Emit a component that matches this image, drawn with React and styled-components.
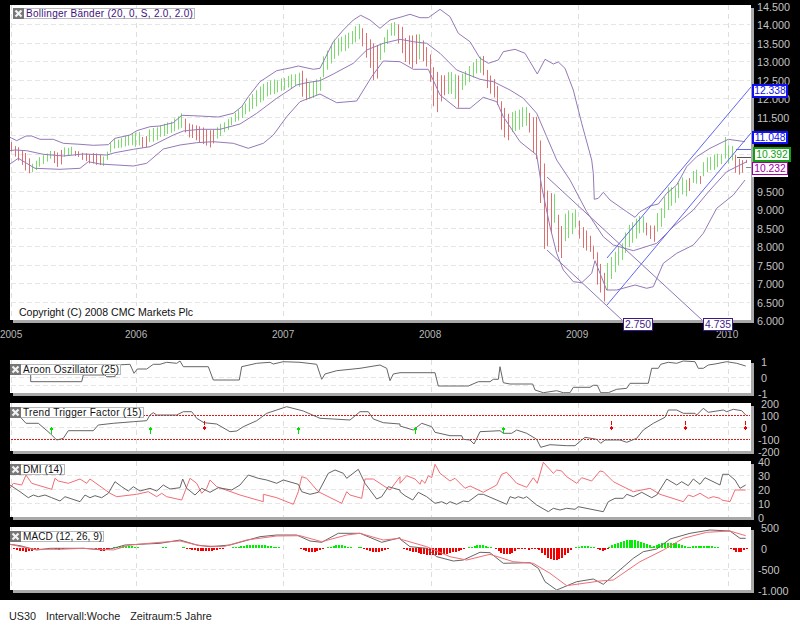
import React from "react";
import styled, { createGlobalStyle } from "styled-components";

const Global = createGlobalStyle`
  html, body { margin: 0; padding: 0; background: #fff; }
  body { font-family: "Liberation Sans", Arial, sans-serif; }
`;

const Page = styled.div`
  width: 800px;
  height: 625px;
  display: flex;
  flex-direction: column;
  overflow: hidden;
`;
const Terminal = styled.div`
  height: 600px;
  box-sizing: border-box;
  background: #000;
  padding: 5px 0 0 10px;
  display: flex;
  flex-direction: column;
`;
const ChartRow = styled.div`
  position: relative;
  display: flex;
  height: ${(p) => p.$height}px;
  margin-bottom: ${(p) => p.$after}px;
`;
const Plot = styled.div`
  position: relative;
  width: 741px;
  height: 100%;
  background: #fff;
  box-shadow: 3px 3px 0 #a9a9a9;
`;
const PlotSvg = styled.svg`
  display: block;
  width: 100%;
  height: 100%;
`;
const Axis = styled.div`
  display: flex;
  flex-direction: column;
  justify-content: space-between;
  align-items: flex-start;
  margin: ${(p) => p.$top}px 0 0 ${(p) => p.$left}px;
  height: ${(p) => p.$height}px;
  color: #c4c4c4;
  font-size: 10.8px;
  line-height: 10px;
  white-space: nowrap;
`;
const AxisLabel = styled.span`
  visibility: ${(p) => (p.$hidden ? "hidden" : "visible")};
`;
const YearAxis = styled.div`
  display: flex;
  height: 40px;
  margin: 0 0 0 -10px;
  color: #b8b8b8;
  font-size: 10px;
  line-height: 12px;
  padding-top: 9px;
  box-sizing: border-box;
`;
const Year = styled.span`
  flex: 0 0 ${(p) => p.$width}px;
`;
const Legend = styled.div`
  position: absolute;
  left: ${(p) => p.$left}px;
  top: ${(p) => p.$top}px;
  display: flex;
  align-items: center;
  height: 9px;
  padding-right: 1px;
  background: #fff;
  border: 1px solid #b9b9b9;
  border-left: 0;
  color: ${(p) => p.$color};
  font-size: 10px;
  line-height: 9px;
  letter-spacing: ${(p) => p.$spacing}px;
  white-space: nowrap;
`;
const CloseBox = styled.span`
  flex: 0 0 11px;
  width: 11px;
  height: 11px;
  margin: -1px 2px -1px 0;
  background: #777;
  display: flex;
  align-items: center;
  justify-content: center;
`;
const Copyright = styled.div`
  position: absolute;
  left: 9px;
  bottom: 1px;
  color: #111;
  font-size: 10.55px;
  line-height: 13px;
  background: #fff;
`;
const PriceTag = styled.div`
  position: absolute;
  left: ${(p) => p.$left}px;
  top: ${(p) => p.$top}px;
  width: ${(p) => p.$width || 36}px;
  height: ${(p) => p.$h || 14}px;
  box-sizing: border-box;
  border: ${(p) => p.$border || 2}px solid ${(p) => p.$color};
  background: #fff;
  color: ${(p) => p.$color};
  font-size: 10.3px;
  line-height: ${(p) => (p.$h || 14) - 2 * (p.$border || 2)}px;
  text-align: center;
  white-space: nowrap;
  box-shadow: ${(p) => (p.$strip ? "0 2px 0 #fff" : "none")};
`;
const Footer = styled.div`
  flex: 1;
  display: flex;
  align-items: center;
  gap: 10px;
  padding: 6px 0 0 9px;
  color: #222;
  font-size: 10.8px;
  white-space: nowrap;
`;

const pts = (...parts) =>
  parts
    .map(([ox, oy, s]) =>
      s
        .trim()
        .split(/\s+/)
        .map((p) => {
          const [x, y] = p.split(",").map(Number);
          return `${(ox + x / 3).toFixed(1)},${(oy + y / 3).toFixed(1)}`;
        })
        .join(" ")
    )
    .join(" ");

const upperBand = pts(
  [0, 0, "30,412 50,422 78,408 95,408 120,418 160,418 190,430 240,433 280,436 325,434 345,415 390,405 410,392 450,380 480,378 520,368 545,346 580,347 655,351 700,340 725,320 745,290 780,245 830,212 870,204 895,198 940,208 960,205 975,175 1000,125 1030,90 1060,60 1082,46 1110,60 1140,85 1170,60 1200,52"],
  [400, 0, "30,43 60,53 85,53 120,28 150,50 175,100 210,125 240,175 265,190 295,180 310,155 345,148 375,160 412,222 435,178 460,192 475,186 495,205 520,270 545,370 575,480"],
  [400, 130, "580,130 583,208 595,205 610,187 630,210 680,245 705,262 720,245 750,228 775,222 800,190 830,165 860,110 890,80 930,55 985,28 1035,35"]
);
const midBand = pts(
  [0, 0, "30,452 45,450 80,452 130,463 190,468 250,462 320,465 345,458 400,448 450,440 520,405 550,393 600,388 660,388 720,372 770,340 830,295 890,255 920,248 960,242 1000,222 1060,190 1100,150 1150,130 1200,118"],
  [400, 0, "40,125 80,130 120,160 170,210 240,238 280,245 330,270 370,295 410,340 440,410 470,480"],
  [400, 130, "510,150 560,245 610,320 640,345 700,362 770,340 820,290 880,240 930,180 980,125 1040,95"]
);
const lowerBand = pts(
  [0, 0, "30,492 55,475 80,490 105,505 180,508 240,505 265,485 300,492 400,498 440,490 490,447 540,435 590,428 640,425 700,430 745,445 790,430 820,405 860,350 900,305 960,282 1010,308 1070,303 1115,230 1150,183 1200,185"],
  [400, 0, "40,208 85,208 120,285 170,325 210,325 250,292 290,305 310,350 360,425 410,465"],
  [400, 130, "425,170 450,290 470,370 490,420 520,455 545,458 575,430 585,392 600,430 620,480 650,480 705,465 740,475 760,470 790,400 830,370 880,345 910,310 950,235 1000,195 1035,150"]
);

const R = "r";
const G = "g";
const keys = [
  [11, 142, 152, R], [26, 153, 172, R], [32, 163, 172, G], [52, 150, 157, G], [54, 153, 165, R], [60, 152, 170, R],
  [62, 147, 157, G], [72, 146, 156, G], [75, 150, 157, R], [97, 155, 165, R], [105, 158, 165, G], [112, 140, 150, G],
  [140, 130, 145, G], [143, 137, 147, R], [146, 137, 147, R], [149, 130, 142, G], [164, 125, 137, G], [183, 112, 128, G],
  [186, 122, 135, R], [212, 132, 147, R], [215, 130, 142, G], [240, 108, 118, G], [262, 85, 100, G], [298, 72, 84, G],
  [302, 72, 95, R], [305, 78, 100, R], [308, 85, 100, G], [320, 78, 92, G], [323, 58, 78, G], [333, 40, 60, G],
  [360, 25, 37, G], [363, 30, 48, R], [368, 37, 63, R], [375, 48, 87, R], [380, 43, 62, G], [392, 20, 33, G],
  [397, 22, 40, R], [402, 27, 53, R], [405, 37, 62, R], [414, 37, 68, R], [418, 33, 57, G], [422, 40, 60, R],
  [428, 50, 70, R], [435, 70, 118, R], [442, 75, 98, R], [447, 72, 95, G], [453, 72, 93, G], [458, 75, 108, R],
  [462, 75, 88, G], [478, 57, 72, G], [483, 57, 75, R], [487, 70, 90, R], [497, 83, 103, R], [500, 98, 128, R],
  [507, 113, 142, R], [510, 113, 132, G], [527, 107, 125, G], [530, 115, 135, R], [532, 118, 153, R], [536, 115, 155, R],
  [540, 140, 205, R], [543, 157, 250, R], [546, 187, 247, R], [549, 197, 248, R], [553, 187, 213, G], [556, 202, 238, R],
  [560, 230, 267, R], [563, 217, 243, G], [567, 210, 238, G], [573, 215, 233, G], [577, 208, 223, G], [580, 227, 245, R],
  [583, 228, 250, R], [590, 237, 253, R], [593, 245, 258, R], [597, 252, 287, R], [600, 262, 293, R], [604, 272, 302, R],
  [607, 263, 290, G], [610, 257, 280, G], [622, 243, 258, G], [627, 227, 248, G], [642, 215, 232, G], [647, 223, 237, R],
  [654, 225, 243, R], [657, 212, 233, G], [662, 205, 223, G], [667, 187, 210, G], [677, 188, 200, G], [680, 178, 193, G],
  [685, 180, 195, G], [688, 182, 195, R], [692, 172, 183, G], [697, 169, 185, G], [700, 175, 185, R], [704, 158, 175, G],
  [717, 153, 167, G], [721, 153, 163, G], [723, 135, 155, G], [728, 146, 163, G], [732, 147, 160, G], [735, 155, 172, R],
  [741, 162, 178, R], [745, 160, 163, R],
];
const jitter = (i) => ((Math.sin(i * 12.9898) * 43758.5453) % 1) * 1.6;
const priceBars = [];
for (let i = 0; i < 260; i++) {
  const x = 11 + i * 3.55;
  if (x > 746) break;
  let k = 0;
  while (k < keys.length - 2 && keys[k + 1][0] < x) k++;
  const a = keys[k];
  const b = keys[k + 1];
  const t = Math.max(0, Math.min(1, (x - a[0]) / (b[0] - a[0])));
  const top = a[1] + (b[1] - a[1]) * t + jitter(i);
  const bot = a[2] + (b[2] - a[2]) * t + jitter(i + 40);
  priceBars.push({ x: Math.round(x) + 0.5, top, bot, c: t < 0.5 ? a[3] : b[3] });
}

const Line = ({ p, c = "#9479b8", w = 1 }) => <polyline points={p} fill="none" stroke={c} strokeWidth={w} />;
const DIAG = "#8f77b5";
const BLUE = "#5f66ee";

const XGrid = ({ y1, y2 }) =>
  [11, 136, 283, 431, 578, 728].map((x) => (
    <line key={x} x1={x + 0.5} x2={x + 0.5} y1={y1} y2={y2} stroke="#dedede" strokeDasharray="5 4" />
  ));
const YGrid = ({ ys }) =>
  ys.map((y) => <line key={y} x1="11" x2="750" y1={y + 0.5} y2={y + 0.5} stroke="#e6e6e6" strokeDasharray="5 3" />);

const mainYs = [24, 43, 61, 80, 98, 117, 135, 154, 172, 191, 209, 228, 246, 265, 283, 302];

const X = () => (
  <svg width="9" height="9" viewBox="0 0 9 9">
    <path d="M1.5 1.5 L7.5 7.5 M7.5 1.5 L1.5 7.5" stroke="#f2f2f2" strokeWidth="2.2" />
  </svg>
);
const LegendBox = ({ left, top, color = "#111", spacing, children }) => (
  <Legend $left={left} $top={top} $color={color} $spacing={spacing}>
    <CloseBox><X /></CloseBox>
    {children}
  </Legend>
);

const aroon = pts(
  [0, 350, "92,72 92,95 245,95 250,75 315,75 320,80 345,80 350,45 390,43 402,70 412,57 440,57 460,43 480,43 500,37 530,40 540,33 550,50 625,50 640,90 718,90 725,50 770,40 810,37 820,42 850,35 900,37 950,43 965,88 975,72 1010,62 1080,55 1140,45 1160,55 1170,92 1180,72 1200,68"],
  [400, 350, "105,68 115,108 205,108 235,95 270,95 280,88 295,88 300,50 310,98 330,102 398,102 405,120 430,128 470,122 490,128 510,128 520,112 570,112 580,106 592,106 602,128 625,128 650,118 680,115 690,100 745,100 755,55 775,55 782,43 805,37 830,40 850,33 885,35 895,55 910,55 925,45 945,42 980,35 1010,40 1037,48"]
);
const trend = pts(
  [0, 350, "60,200 78,220 115,220 150,250 170,270 190,265 205,242 280,242 295,225 340,220 400,215 440,212 450,195 460,188 470,195 530,195 550,185 575,185 590,205 612,218 650,222 690,245 710,243 730,230 770,212 800,190 830,180 860,170 910,183 960,205 1000,207 1050,210 1080,185 1105,185 1120,207 1150,218 1200,222"],
  [400, 350, "0,228 40,240 65,220 95,230 105,247 150,257 185,257 190,268 210,270 222,282 240,245 300,242 310,250 335,250 350,240 380,250 410,268 422,292 450,284 500,287 525,287 545,270 555,262 590,268 602,280 615,270 660,270 680,277 710,265 730,240 760,220 795,202 805,180 830,180 850,190 885,190 890,195 910,175 925,187 970,180 980,185 1000,178 1025,182 1037,195"]
);
const dmiBlack = pts(
  [0, 455, "30,90 60,110 85,128 100,120 115,125 135,120 155,128 180,138 195,125 240,140 255,120 270,128 285,122 305,128 325,115 345,80 365,95 385,108 400,95 420,108 450,100 470,108 490,90 510,102 540,98 548,72 560,100 585,120 605,100 630,112 655,98 695,105 720,90 745,60 775,70 800,75 830,85 850,75 895,88 905,110 930,118 955,112 985,55 1005,45 1030,55 1040,70 1075,43 1095,85 1130,132 1145,125 1165,95 1200,105"],
  [400, 455, "0,110 15,122 38,135 55,112 80,125 105,145 125,140 140,147 150,140 170,148 190,138 205,140 235,118 250,118 320,148 330,125 345,130 355,125 370,130 380,125 410,150 445,170 460,160 480,165 500,160 525,163 535,155 610,170 625,140 645,130 670,130 680,118 700,125 725,112 755,128 770,120 800,72 830,90 845,80 865,92 880,72 900,88 915,68 960,90 968,58 985,58 1005,75 1020,100 1037,90"]
);
const dmiRed = pts(
  [0, 455, "30,100 40,85 65,90 78,60 95,85 155,103 165,70 175,78 205,85 240,72 260,85 270,72 330,115 350,125 410,118 445,110 470,125 485,115 500,125 545,135 570,70 590,85 605,115 620,100 630,75 650,95 720,120 790,140 790,118 830,128 880,148 895,110 905,65 920,70 955,110 1025,145 1040,110 1050,120 1085,130 1095,72 1120,72 1170,105 1200,65"],
  [400, 455, "0,85 20,62 45,72 60,88 65,75 75,85 85,62 95,68 105,28 120,55 150,78 165,70 195,100 210,93 250,112 290,90 305,58 320,52 350,85 380,97 400,68 412,85 430,22 460,55 470,45 485,48 500,65 530,85 545,68 575,78 600,48 610,50 640,80 700,110 750,100 780,118 850,140 865,120 880,125 900,115 925,130 940,125 960,130 965,135 990,140 1005,105 1037,105"]
);
const macdBlack = pts(
  [0, 455, "30,268 60,272 110,285 150,280 250,280 310,285 340,280 375,270 480,265 540,255 590,270 630,275 690,270 780,245 830,240 890,240 930,258 965,262 1015,235 1080,235 1145,262 1200,248"],
  [400, 455, "0,252 30,275 80,280 110,305 160,318 190,315 240,292 270,293 310,325 390,323 415,340 435,380 470,405 530,380 580,372 610,388 700,310 730,290 770,282 810,252 870,235 930,225 990,228 1020,250 1037,250"]
);
const macdRed = pts(
  [0, 455, "30,268 100,283 180,283 250,280 340,285 390,270 480,262 540,258 600,272 670,275 740,255 830,243 900,242 965,260 1040,240 1080,235 1150,255 1200,250"],
  [400, 455, "0,252 80,275 150,305 200,315 270,298 340,320 400,325 450,355 500,392 600,378 640,375 720,320 790,285 850,250 920,232 990,228 1037,242"]
);

const histGroups = [
  [0, 40, 110, 3.5, R], [0, 165, 185, 1.5, R], [0, 285, 325, 3, R], [0, 340, 410, 2, G], [0, 485, 495, 1, G], [0, 545, 550, 1, G],
  [0, 558, 665, 3.5, R], [0, 695, 835, 3, G], [0, 900, 965, 4, R], [0, 980, 1050, 3, G], [0, 1075, 1080, 1, G], [0, 1090, 1160, 4, R],
  [400, 10, 190, 7, R], [400, 205, 270, 3, G], [400, 285, 350, 6, R], [400, 355, 410, 1.5, R], [400, 415, 510, 12, R], [400, 525, 580, 2, G],
  [400, 590, 620, 3, R], [400, 625, 755, 8, G], [400, 750, 860, 5.5, G], [400, 860, 950, 2.5, G], [400, 990, 1037, 4, R],
];
const histBars = [];
histGroups.forEach(([ox, a, b, amp, c]) => {
  const n = Math.max(1, Math.round((b - a) / 8.5));
  for (let i = 0; i <= n; i++) {
    const t = i / n;
    const skew = Math.sin(t * Math.PI);
    histBars.push({ x: Math.round(ox + (a + ((b - a) * i) / n) / 3), h: Math.max(1, Math.round(amp * (0.15 + 0.85 * skew))), c });
  }
});

const Arrow = ({ x, up }) => {
  const color = up ? "#00e000" : "#f00000";
  const head = up ? 427 : 426;
  const stemA = up ? 430 : 421;
  return (
    <g fill={color}>
      <rect x={x} y={stemA} width="1" height="4" />
      <rect x={x} y={head} width="1" height="4" />
      <rect x={x - 1} y={head + 1} width="3" height="2" />
    </g>
  );
};

const PanelSvg = ({ y, h, children }) => (
  <PlotSvg viewBox={`10 ${y} 741 ${h}`} preserveAspectRatio="none">
    {children}
  </PlotSvg>
);

const years = [
  ["2005", 125], ["2006", 147], ["2007", 147], ["2008", 147], ["2009", 150], ["2010", 40],
];
const mainLabels = [
  ["14.500"], ["14.000"], ["13.500"], ["13.000"], ["12.500"], ["12.000"], ["11.500"], ["11.000", true], ["10.500", true],
  ["10.000", true], ["9.500"], ["9.000"], ["8.500"], ["8.000"], ["7.500"], ["7.000"], ["6.500"], ["6.000"],
];

export default function App() {
  return (
    <Page>
      <Global />
      <Terminal>
        <ChartRow $height={315} $after={0}>
          <Plot>
            <PanelSvg y={5} h={315}>
              <XGrid y1={5} y2={320} />
              <YGrid ys={mainYs} />
              {priceBars.map((b, i) => (
                <line key={i} x1={b.x} x2={b.x} y1={b.top} y2={b.bot} stroke={b.c === G ? "#79dc6c" : "#dc6f70"} />
              ))}
              <Line p={upperBand} />
              <Line p={midBand} />
              <Line p={lowerBand} />
              <Line p="547,177 702,320" c={DIAG} />
              <Line p="547,250 622,320" c={DIAG} />
              <Line p="607,258 751,87" c={BLUE} />
              <Line p="607,305 751,133" c={BLUE} />
              <Line p="736,149.5 751,149.5" c={BLUE} />
              <Line p="737,157.5 751,157.5" c="#555" />
              <Line p="746,167.5 751,167.5" c="#888" />
            </PanelSvg>
            <LegendBox left={3} top={3} color="#3f1080" spacing={0.28}>Bollinger Bänder (20, 0, S, 2.0, 2.0)</LegendBox>
            <Copyright>Copyright (C) 2008 CMC Markets Plc</Copyright>
          </Plot>
          <Axis $top={-3} $left={6} $height={324}>
            {mainLabels.map(([t, hidden]) => (
              <AxisLabel key={t} $hidden={hidden}>{t}</AxisLabel>
            ))}
          </Axis>
          <PriceTag $left={742} $top={79} $color="#1010f0">12.338</PriceTag>
          <PriceTag $left={742} $top={126} $h={13} $color="#1010f0">11.048</PriceTag>
          <PriceTag $left={743} $top={142} $width={38} $h={15} $color="#12a012">10.392</PriceTag>
          <PriceTag $left={742} $top={157} $h={13} $border={1} $strip $color="#a000a0">10.232</PriceTag>
          <PriceTag $left={613} $top={313} $width={30} $h={13} $border={1} $color="#3d1a88">2.750</PriceTag>
          <PriceTag $left={693} $top={313} $width={30} $h={13} $border={1} $color="#3d1a88">4.735</PriceTag>
        </ChartRow>
        <YearAxis>
          {years.map(([y, w]) => (
            <Year key={y} $width={w}>{y}</Year>
          ))}
        </YearAxis>
        <ChartRow $height={33} $after={10}>
          <Plot>
            <PanelSvg y={360} h={33}>
              <XGrid y1={360} y2={393} />
              <YGrid ys={[377, 385]} />
              <Line p={aroon} c="#666" />
            </PanelSvg>
            <LegendBox left={0} top={4} spacing={0.22}>Aroon Oszillator (25)</LegendBox>
          </Plot>
          <Axis $top={-3} $left={7} $height={42}>
            <span>&nbsp;1</span>
            <span>&nbsp;0</span>
            <span>-1</span>
          </Axis>
        </ChartRow>
        <ChartRow $height={48} $after={10}>
          <Plot>
            <PanelSvg y={403} h={48}>
              <XGrid y1={403} y2={451} />
              <YGrid ys={[427]} />
              <line x1="11" x2="750" y1="415.5" y2="415.5" stroke="#e01818" strokeDasharray="2 1" />
              <line x1="11" x2="750" y1="439.5" y2="439.5" stroke="#e01818" strokeDasharray="2 1" />
              <Line p={trend} c="#666" />
              {[51, 150, 298, 415, 503].map((x) => (
                <Arrow key={x} x={x} up />
              ))}
              {[204, 611, 685, 745].map((x) => (
                <Arrow key={x} x={x} />
              ))}
            </PanelSvg>
            <LegendBox left={0} top={4} spacing={0.3}>Trend Trigger Factor (15)</LegendBox>
          </Plot>
          <Axis $top={-4} $left={7} $height={58}>
            <span>&nbsp;200</span>
            <span>&nbsp;100</span>
            <span>&nbsp;0</span>
            <span>-100</span>
            <span>-200</span>
          </Axis>
        </ChartRow>
        <ChartRow $height={56} $after={10}>
          <Plot>
            <PanelSvg y={461} h={56}>
              <XGrid y1={461} y2={517} />
              <YGrid ys={[475, 489, 503]} />
              <Line p={dmiRed} c="#f26d74" />
              <Line p={dmiBlack} c="#666" />
            </PanelSvg>
            <LegendBox left={0} top={3} spacing={0.1}>DMI (14)</LegendBox>
          </Plot>
          <Axis $top={-4} $left={7} $height={66}>
            {["40", "30", "20", "10", "0"].map((t) => (
              <span key={t}>{t}</span>
            ))}
          </Axis>
        </ChartRow>
        <ChartRow $height={63} $after={0}>
          <Plot>
            <PanelSvg y={527} h={63}>
              <XGrid y1={527} y2={590} />
              <YGrid ys={[569]} />
              {histBars.map((b, i) => (
                <rect
                  key={i}
                  x={b.x}
                  y={b.c === G ? 548 - b.h : 548}
                  width="2"
                  height={b.h}
                  fill={b.c === G ? "#00ee00" : "#f00000"}
                />
              ))}
              <Line p={macdBlack} c="#666" />
              <Line p={macdRed} c="#f26d74" />
            </PanelSvg>
            <LegendBox left={0} top={4} spacing={0.1}>MACD (12, 26, 9)</LegendBox>
          </Plot>
          <Axis $top={-4} $left={7} $height={73.5}>
            <span>&nbsp;500</span>
            <span>&nbsp;0</span>
            <span>-500</span>
            <span>-1.000</span>
          </Axis>
        </ChartRow>
      </Terminal>
      <Footer>
        <span>US30</span>
        <span>Intervall:Woche</span>
        <span>Zeitraum:5 Jahre</span>
      </Footer>
    </Page>
  );
}
